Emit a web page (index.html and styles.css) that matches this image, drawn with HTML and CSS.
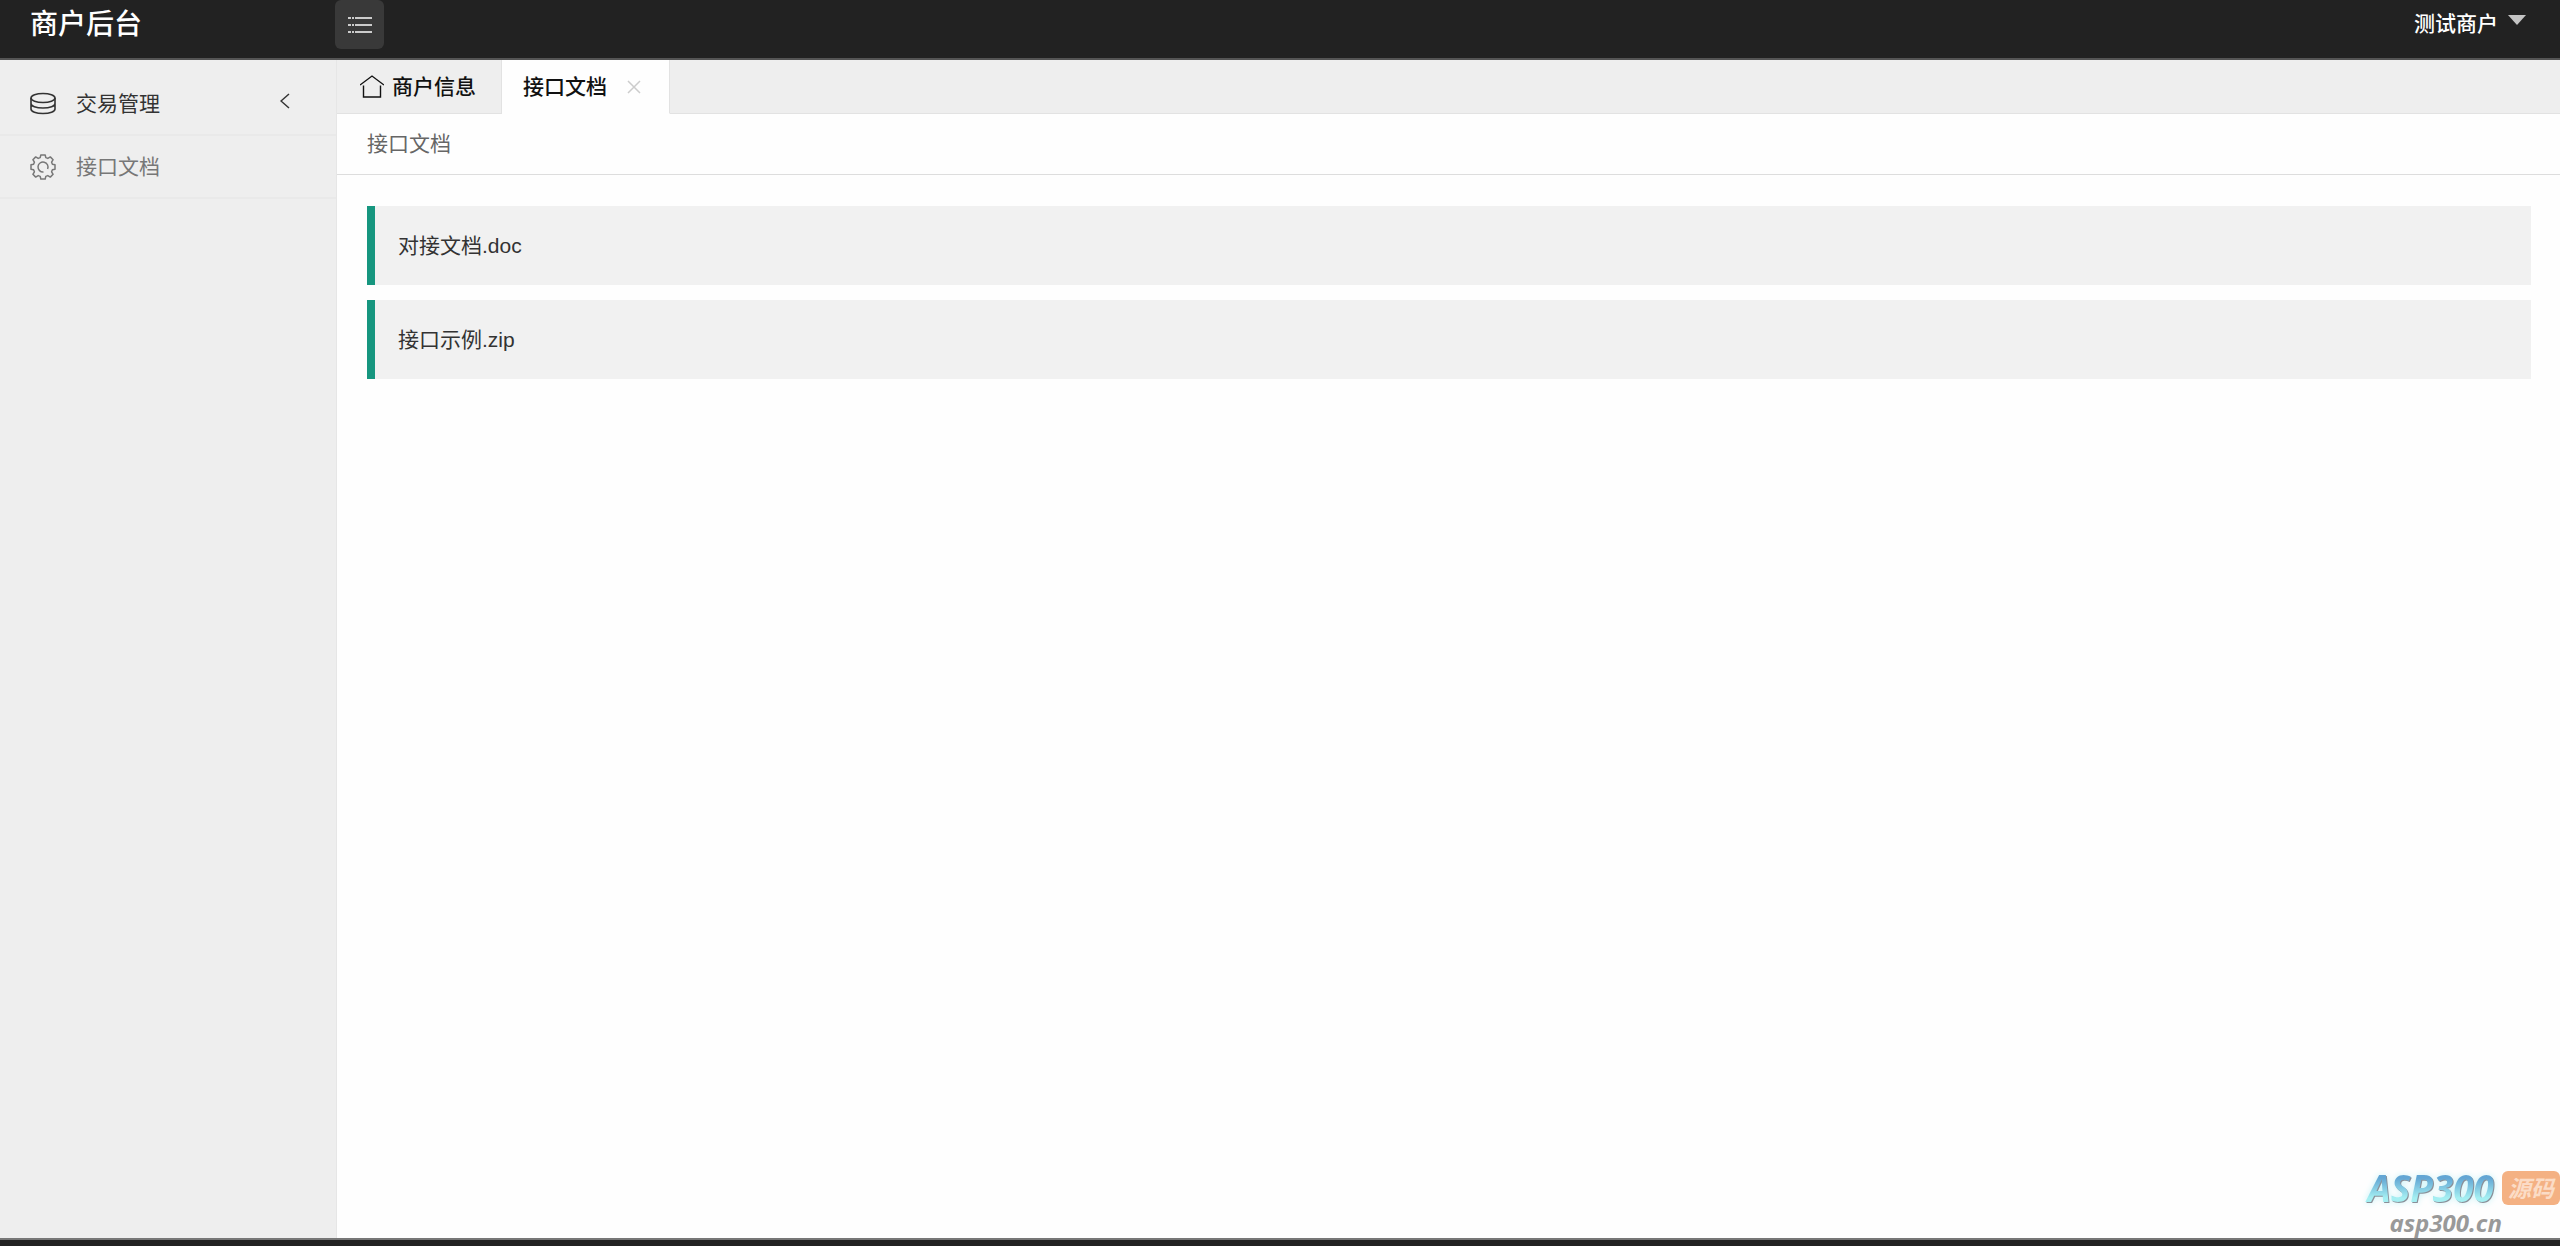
FILE: index.html
```html
<!DOCTYPE html>
<html lang="zh-CN">
<head>
    <meta charset="utf-8">
    <title>商户后台</title>
    <link rel="stylesheet" href="styles.css">
</head>
<body>
    <header class="header">
        <h1 class="logo">商户后台</h1>
        <button type="button" class="toggle" aria-label="收起菜单">
            <svg width="26" height="18" viewBox="0 0 26 18" fill="none" stroke="currentColor" stroke-width="2">
                <path d="M1 2h3M5 2h2M8 2h17M1 9h3M5 9h2M8 9h17M1 16h3M5 16h2M8 16h17"/>
            </svg>
        </button>
        <button type="button" class="user">测试商户
            <svg width="18" height="10" viewBox="0 0 18 10" fill="#c4c4c4"><path d="M0 0h18L9 10z"/></svg>
        </button>
    </header>

    <div class="main">
        <nav class="sidebar">
            <a href="#trade" class="menu-item open">
                <svg width="26" height="24" viewBox="0 0 26 24" fill="none" stroke="currentColor" stroke-width="1.6">
                    <ellipse cx="13" cy="6" rx="12" ry="4.500"/>
                    <path d="M1 6v5.500c0 2.500 5 4.500 12 4.500s12-2 12-4.500V6M1 11.500V17c0 2.500 5 4.500 12 4.500s12-2 12-4.500v-5.500"/>
                </svg>
                <span>交易管理</span>
                <svg class="arrow" width="10" height="16" viewBox="0 0 10 16" fill="none" stroke="currentColor" stroke-width="1.500"><path d="M9 1L1 8l8 7"/></svg>
            </a>
            <a href="#docs" class="menu-item">
                <svg width="26" height="26" viewBox="0 0 26 26" fill="none" stroke="currentColor" stroke-width="1.500" stroke-linejoin="round">
                    <path d="M10.800 1h4.400l.6 2.600 2 .8 2.500-1.500 2.800 2.800-1.500 2.500.8 2 2.600.6v4.400l-2.600.6-.8 2 1.500 2.500-2.800 2.800-2.500-1.500-2 .8-.6 2.600h-4.400l-.6-2.600-2-.8-2.500 1.500-2.800-2.800 1.500-2.500-.8-2L1 15.200v-4.400l2.600-.6.8-2-1.500-2.500 2.800-2.800 2.500 1.500 2-.8z"/>
                    <path d="M13.500 18A5 5 0 1 1 17.600 15"/>
                </svg>
                <span>接口文档</span>
            </a>
        </nav>

        <div class="content">
            <div class="tabs">
                <a href="#info" class="tab">
                    <svg width="24" height="23" viewBox="0 0 24 23" fill="none" stroke="currentColor" stroke-width="1.400"><path d="M0 10L12 1l12 9M3.500 10.500V22h17V10.500"/></svg>
                    商户信息
                </a>
                <div class="tab active">
                    <a href="#docs">接口文档</a>
                    <button type="button" class="close" aria-label="关闭">
                        <svg width="14" height="14" viewBox="0 0 14 14" fill="none" stroke="currentColor" stroke-width="1.500"><path d="M1 1l12 12M13 1L1 13"/></svg>
                    </button>
                </div>
            </div>
            <h2 class="title">接口文档</h2>
            <div class="files">
                <a href="#doc" class="file">对接文档.doc</a>
                <a href="#zip" class="file">接口示例.zip</a>
            </div>
        </div>
    </div>

    <footer class="footer"></footer>

    <div class="watermark">
        <div class="brand">
            <span class="brand-name">ASP300</span>
            <span class="brand-tag">源码</span>
        </div>
        <span class="brand-site">asp300.cn</span>
    </div>
</body>
</html>
```
FILE: styles.css
```css
* {
    box-sizing: border-box;
}

body {
    margin: 0;
    min-height: 100vh;
    display: flex;
    flex-direction: column;
    background: #fefefe;
    color: #333;
    font-family: "Liberation Sans", "Noto Sans CJK SC", sans-serif;
    font-size: 21px;
    line-height: 32px;
}

a {
    color: inherit;
    text-decoration: none;
}

button {
    padding: 0;
    border: 0;
    background: none;
    color: inherit;
    font: inherit;
    cursor: pointer;
}

svg {
    display: block;
    flex: none;
}

/* 顶部 */
.header {
    height: 60px;
    display: flex;
    align-items: flex-start;
    padding-right: 34px;
    background: #222;
    border-bottom: 2px solid #555;
    color: #fff;
}

.logo {
    width: 335px;
    margin: 0;
    padding-left: 30px;
    font-size: 28px;
    font-weight: 500;
    line-height: 49px;
}

.toggle {
    width: 49px;
    height: 49px;
    display: flex;
    align-items: center;
    justify-content: center;
    background: #393939;
    border-radius: 6px;
    color: #ccc;
}

.user {
    margin-left: auto;
    display: flex;
    gap: 10px;
    font-weight: 500;
    line-height: 48px;
}

.user svg {
    margin-top: 15px;
}

.main {
    flex: 1;
    display: flex;
}

/* 左侧菜单 */
.sidebar {
    width: 337px;
    padding-top: 13px;
    background: #eee;
    border-right: 1px solid #e6e6e6;
}

.menu-item {
    height: 63px;
    display: flex;
    align-items: center;
    gap: 20px;
    padding: 0 46px 0 30px;
    border-bottom: 2px solid #e9e9e9;
    color: #777;
}

.menu-item.open {
    color: #333;
}

.arrow {
    margin-left: auto;
    margin-bottom: 6px;
}

/* 标签页 */
.content {
    flex: 1;
}

.tabs {
    height: 54px;
    display: flex;
    background: #eee;
    border-bottom: 1px solid #e2e2e2;
    color: #111;
    font-weight: 500;
}

.tab {
    height: 54px;
    display: flex;
    align-items: center;
    gap: 8px;
    padding: 0 25px 0 23px;
    border-right: 1px solid #e2e2e2;
    border-bottom: 1px solid #e2e2e2;
}

.tab.active {
    gap: 20px;
    padding: 0 28px 0 21px;
    background: #fefefe;
    border-bottom-color: #fefefe;
}

.close {
    color: #ccc;
}

.title {
    margin: 0;
    padding: 14px 30px;
    border-bottom: 1px solid #ddd;
    color: #666;
    font-size: 21px;
    font-weight: 400;
}

/* 文件列表 */
.files {
    display: flex;
    flex-direction: column;
    gap: 15px;
    padding: 31px 29px 31px 30px;
}

.file {
    padding: 24px 23px;
    background: #f1f1f1;
    border-left: 8px solid #16967f;
    line-height: 31px;
}

.footer {
    height: 8px;
    background: #222;
    border-top: 2px solid #777;
}

/* 右下角水印 */
.watermark {
    position: absolute;
    right: 0;
    bottom: 8px;
    display: flex;
    flex-direction: column;
    font-family: "Open Sans", "Noto Sans CJK SC", sans-serif;
    font-style: italic;
    font-weight: 700;
}

.brand {
    display: flex;
    align-items: center;
    gap: 4px;
}

.brand-name {
    padding: 0 4px;
    background: linear-gradient(#62a6d4 25%, #a5eff2 75%);
    -webkit-background-clip: text;
    background-clip: text;
    color: transparent;
    font-size: 37px;
    line-height: 40px;
    filter: drop-shadow(1px 1px 0 #8a8f98) drop-shadow(0 0 3px #c9f3f8);
}

.brand-tag {
    width: 58px;
    border-radius: 6px;
    background: #f4b183;
    color: #fbdcc6;
    font-size: 23px;
    font-weight: 700;
    line-height: 34px;
    text-align: center;
}

.brand-site {
    padding-left: 26px;
    color: #999;
    font-size: 24px;
    line-height: 30px;
}
```
